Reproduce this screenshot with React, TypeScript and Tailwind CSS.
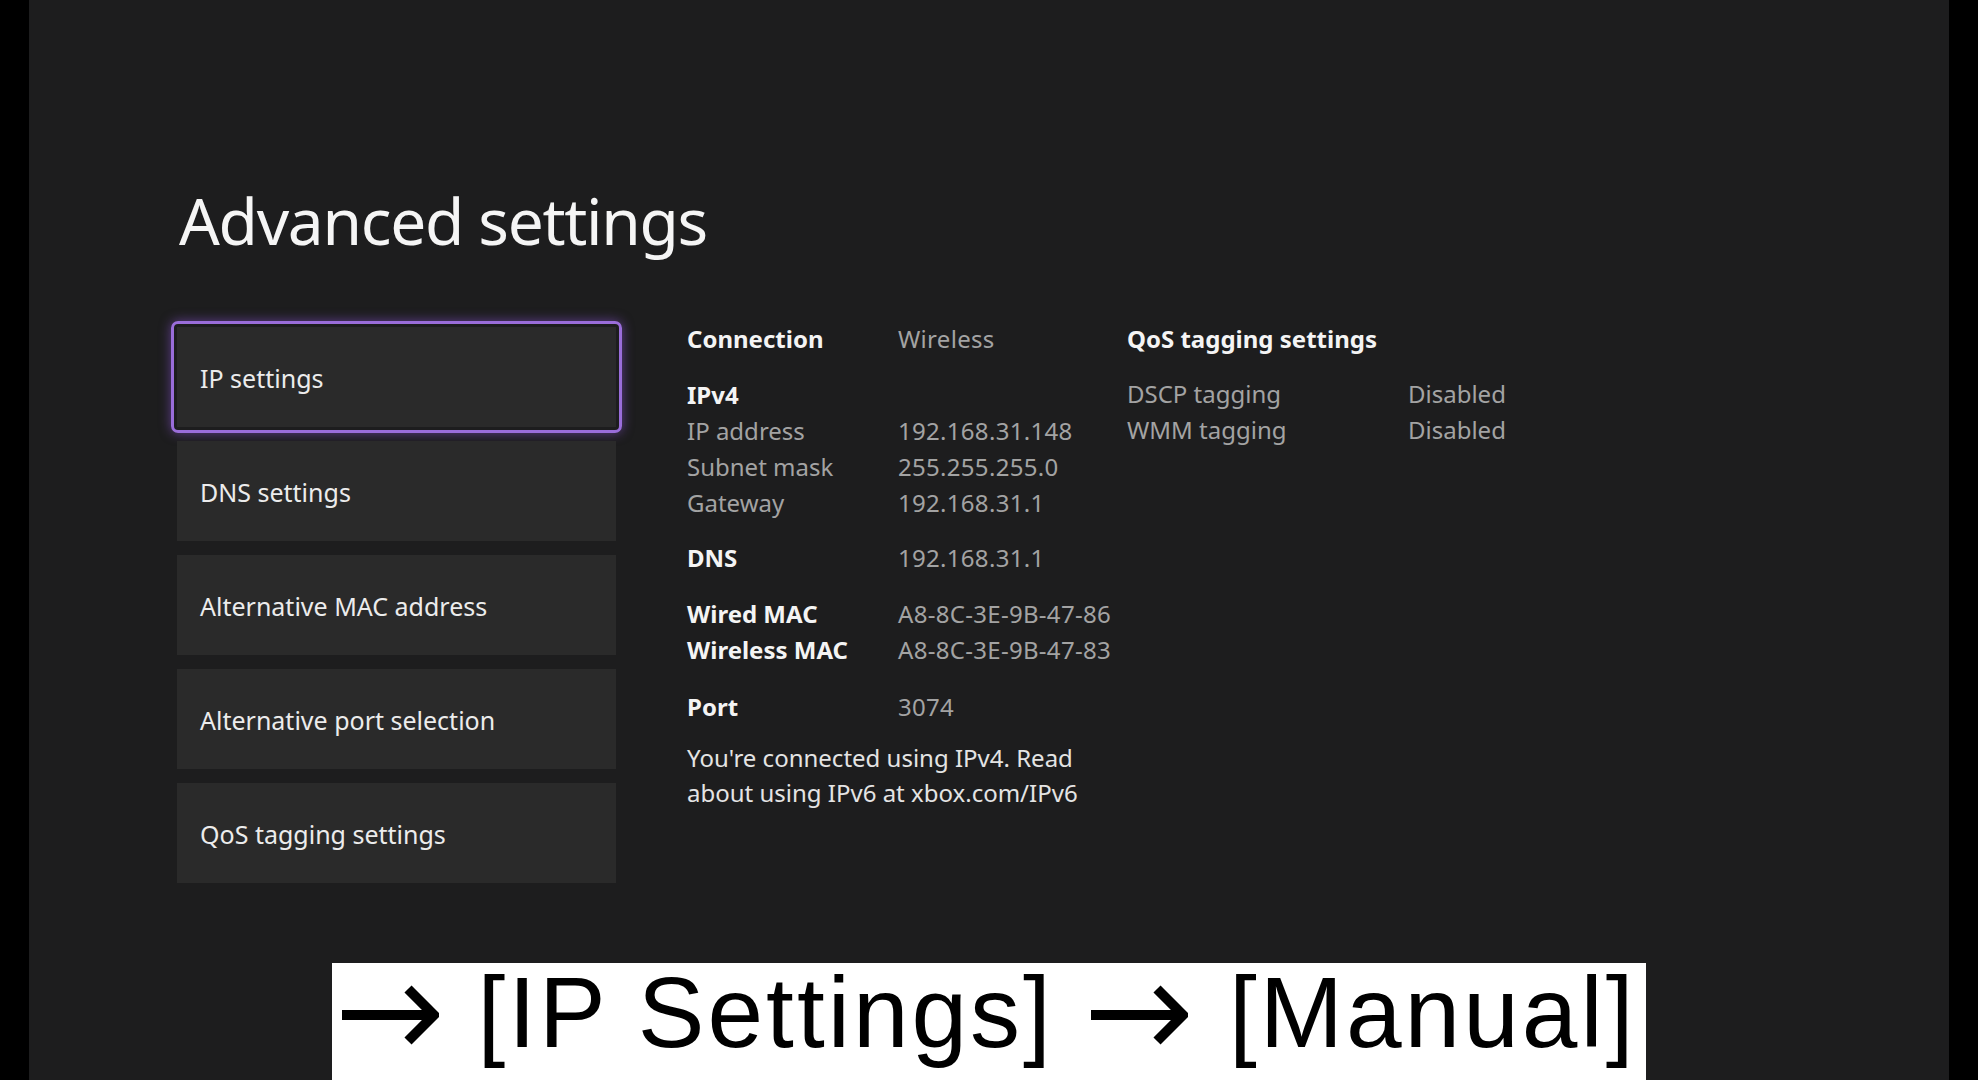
import { ReactNode } from "react";

const menu = [
  "IP settings",
  "DNS settings",
  "Alternative MAC address",
  "Alternative port selection",
  "QoS tagging settings",
];

function Row({ label, value, head }: { label: string; value?: string; head?: boolean }) {
  return (
    <div className="flex h-[36px] items-center leading-[36px]">
      <span className={head ? "w-[211px] font-bold text-[#f4f4f4]" : "w-[211px] text-[#a3a3a3]"}>{label}</span>
      {value && <span className="tracking-[0.3px] text-[#a3a3a3]">{value}</span>}
    </div>
  );
}

function Group({ children, className = "" }: { children: ReactNode; className?: string }) {
  return <div className={"flex flex-col " + className}>{children}</div>;
}

function Arrow() {
  return (
    <svg width="97" height="60" viewBox="0 0 97 60" className="mt-[7px] shrink-0">
      <path d="M0 30H92" stroke="black" strokeWidth="10" fill="none" />
      <path d="M66 4L92 30L66 56" stroke="black" strokeWidth="10" fill="none" strokeLinejoin="miter" />
    </svg>
  );
}

export default function App() {
  return (
    <div className="flex h-[1080px] w-[1978px] overflow-hidden bg-black font-['Noto_Sans',sans-serif]">
      <div className="ml-[29px] flex h-full w-[1920px] flex-col bg-[#1d1d1e]">
        <h1 className="ml-[150px] mt-[189px] text-[64px] font-normal leading-[64px] tracking-[-1.3px] text-[#f5f5f5]">
          Advanced settings
        </h1>

        <div className="ml-[148px] mt-[68px] flex items-start gap-[71px]">
          <div className="mt-[6px] flex w-[439px] flex-col gap-[14px]">
            {menu.map((m, i) => (
              <div key={m} className="relative flex h-[100px] items-center bg-[#2a2a2a] pl-[23px] pt-[4px] text-[25px] text-[#ececec]">
                {i === 0 && (
                  <div className="absolute -inset-x-[6px] -inset-y-[6px] rounded-[7px] border-[3px] border-[#9a6dda] shadow-[0_0_12px_rgba(150,90,230,0.55)]" />
                )}
                <span className="relative">{m}</span>
              </div>
            ))}
          </div>

          <div className="flex text-[24px]">
            <div className="flex w-[440px] flex-col">
              <Row label="Connection" value="Wireless" head />
              <Group className="mt-[20px]">
                <Row label="IPv4" head />
                <Row label="IP address" value="192.168.31.148" />
                <Row label="Subnet mask" value="255.255.255.0" />
                <Row label="Gateway" value="192.168.31.1" />
              </Group>
              <Group className="mt-[19px]">
                <Row label="DNS" value="192.168.31.1" head />
              </Group>
              <Group className="mt-[20px]">
                <Row label="Wired MAC" value="A8-8C-3E-9B-47-86" head />
                <Row label="Wireless MAC" value="A8-8C-3E-9B-47-83" head />
              </Group>
              <Group className="mt-[21px]">
                <Row label="Port" value="3074" head />
              </Group>
              <p className="mt-[15px] leading-[35px] text-[#e4e4e4]">
                You're connected using IPv4. Read
                <br />
                about using IPv6 at xbox.com/IPv6
              </p>
            </div>

            <div className="flex flex-col">
              <div className="h-[36px] font-bold leading-[36px] text-[#f4f4f4]">QoS tagging settings</div>
              <div className="mt-[19px] flex h-[36px] leading-[36px] text-[#a3a3a3]">
                <span className="w-[281px]">DSCP tagging</span>
                <span>Disabled</span>
              </div>
              <div className="flex h-[36px] leading-[36px] text-[#a3a3a3]">
                <span className="w-[281px]">WMM tagging</span>
                <span>Disabled</span>
              </div>
            </div>
          </div>
        </div>

        <div className="ml-[303px] mt-auto flex h-[117px] w-[1314px] items-center justify-center bg-white pb-[20px] font-['Liberation_Sans',Arial,sans-serif] text-[100px] leading-none text-black">
          <Arrow />
          <span className="ml-[39px] tracking-[3px]">[IP Settings]</span>
          <span className="ml-[37px] flex">
            <Arrow />
          </span>
          <span className="ml-[41px] tracking-[3px]">[Manual]</span>
        </div>
      </div>
    </div>
  );
}
